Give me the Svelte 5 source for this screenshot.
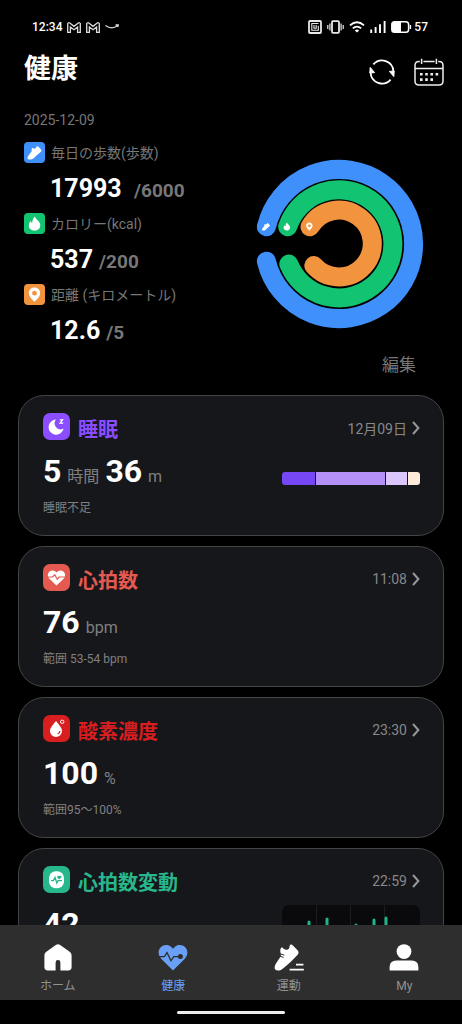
<script lang="ts">
	interface Card {
		id: string;
		title: string;
		color: string;
		time: string;
		values: [string, string?][];
		note?: string;
	}

	// 24x24 glyphs shared by the metric badges and the rings
	const glyphs = {
		shoe: 'M2 21.5C1 19.8 2 17.6 4 15.2L7.6 10.4C8.2 9.4 7.4 7.4 8.2 5.8C9 4.6 10 6.4 11.8 6.4C14 6.4 14.4 4.6 15 3.2C15.6 2 16.8 2.6 18.2 4L21.6 7.6C22.8 9 22.4 10 21 11.4L15 16.6L10.4 20.8C8 22.8 4 23 2 21.5Z',
		flame:
			'M12.6 1.5C13.4 5 18 7.2 19.8 11.2C22.4 17.4 18 22.5 12 22.5C5.6 22.5 2.4 17.6 4 12.8C4.6 10.8 5.6 9.6 6.4 8.4C7 9.8 7.4 10.8 8.6 11.4C8.6 7.2 10 4 12.6 1.5Z',
		pin: 'M12 1.5C7 1.5 3.6 5.2 3.6 9.8C3.6 15 9.4 20.4 12 22.8C14.6 20.4 20.4 15 20.4 9.8C20.4 5.2 17 1.5 12 1.5ZM12 6.4A3.6 3.6 0 1 1 12 13.6A3.6 3.6 0 1 1 12 6.4Z'
	};

	const metrics = [
		{ label: '毎日の歩数(歩数)', value: '17993 ', goal: '/6000', color: '#4090fb', glyph: glyphs.shoe },
		{ label: 'カロリー(kcal)', value: '537', goal: '/200', color: '#12c471', glyph: glyphs.flame },
		{ label: '距離 (キロメートル)', value: '12.6', goal: '/5', color: '#f2943e', glyph: glyphs.pin }
	];

	const rings = [
		{ d: 'M12.4 67.8A74.6 74.6 0 1 1 12.4 102.2', icon: 'translate(7.4 63)', ...metrics[0] },
		{ d: 'M33.7 67.7A54 54 0 1 1 34.8 105', icon: 'translate(28.2 63)', ...metrics[1] },
		{ d: 'M56 67.8A33.4 33.4 0 1 1 59.8 106.6', icon: 'translate(50.8 63)', ...metrics[2] }
	];

	const cards: Card[] = [
		{
			id: 'sleep',
			title: '睡眠',
			color: '#8a4dff',
			time: '12月09日',
			values: [
				['5', '時間'],
				['36', 'm']
			],
			note: '睡眠不足'
		},
		{
			id: 'heart',
			title: '心拍数',
			color: '#e55a50',
			time: '11:08',
			values: [['76', 'bpm']],
			note: '範囲 53-54 bpm'
		},
		{
			id: 'oxygen',
			title: '酸素濃度',
			color: '#d91e20',
			time: '23:30',
			values: [['100', '%']],
			note: '範囲95〜100%'
		},
		{
			id: 'hrv',
			title: '心拍数変動',
			color: '#28b78c',
			time: '22:59',
			values: [['42']]
		}
	];

	const sleepStages = [
		{ share: 33, color: '#7648f5' },
		{ share: 70, color: '#b490f8' },
		{ share: 21, color: '#dac6fa' },
		{ share: 12, color: '#feead8' }
	];

	const hrvBars = [
		{ x: 27, top: 16 },
		{ x: 45, top: 13 },
		{ x: 74, top: 19 },
		{ x: 92, top: 14 },
		{ x: 104, top: 12 }
	];
</script>

<div class="screen">
	<div class="status">
		<span>12:34</span>
		{#each [0, 1] as mail (mail)}
			<svg width="14" height="11" viewBox="0 0 14 11" fill="none" stroke="#ddd" stroke-width="1.3">
				<path d="M.7 10.3V1.6Q1.4.2 2.8 1L7 4.3L11.2 1Q12.6.2 13.3 1.6V10.3H10.6V5L7 7.8L3.4 5V10.3Z" />
			</svg>
		{/each}
		<svg width="14" height="6" viewBox="0 0 14 6" fill="none" stroke="#ddd" stroke-width="1.3">
			<path d="M.5 1.5Q6.5 6 12.4 1.8M10.6 1H13.2L12.8 3" />
		</svg>
		<span class="spacer"></span>
		<svg width="14" height="14" viewBox="0 0 14 14" fill="none" stroke="#e8e8e8">
			<rect x="1" y="1" width="12" height="12" rx="1" stroke-width="1.8" />
			<path d="M10.5 3.5H3.8V10.3H10.3V5.8M6 5V8.2H8.2V5" stroke-width="1.1" />
		</svg>
		<svg width="17" height="14" viewBox="0 0 17 14" fill="none" stroke="#e8e8e8">
			<rect x="5" y="1.2" width="7" height="11.6" rx="1" stroke-width="1.8" />
			<path d="M2.9 3.5V10.5M14.1 3.5V10.5M.8 5V9M16.2 5V9" stroke-width="1.2" />
		</svg>
		<svg width="16" height="12" viewBox="0 0 16 12" fill="none" stroke="#fff" stroke-width="1.8">
			<path d="M1 4.4Q8-1.8 15 4.4M3.8 7.4Q8 3.8 12.2 7.4" />
			<path d="M5.8 9.4Q8 7.8 10.2 9.4L8 11.6Z" fill="#fff" stroke="none" />
		</svg>
		<svg width="16" height="12" viewBox="0 0 16 12" stroke="#fff" stroke-width="1.9">
			<path d="M1.2 8.6V12M5.6 6V12M10 3.2V12M14.6 0V12" />
		</svg>
		<div class="battery">
			<svg width="21" height="12" viewBox="0 0 21 12">
				<rect x=".8" y=".8" width="16.8" height="10.4" rx="2.8" fill="none" stroke="#fff" stroke-width="1.5" />
				<path d="M3 1H10V11H3Q1 11 1 8.5V3.5Q1 1 3 1Z" fill="#fff" />
				<path d="M19.4 4V8" stroke="#fff" stroke-width="1.4" />
			</svg>
			57
		</div>
	</div>

	<header>
		<h1>健康</h1>
		<button aria-label="更新">
			<svg width="28" height="28" viewBox="0 0 28 28" fill="none" stroke="#fff" stroke-width="1.8">
				<path d="M2.6 14.5A11.4 11.4 0 0 0 22.6 21.6M25.4 13.5A11.4 11.4 0 0 0 5.4 6.4" />
				<path d="M2.2 9.4L6.6 14.6L1.8 15ZM25.8 18.6L21.4 13.4L26.2 13Z" fill="#fff" stroke-width="1" />
			</svg>
		</button>
		<button aria-label="カレンダー">
			<svg width="30" height="28" viewBox="0 0 30 28" fill="none" stroke="#eee" stroke-width="1.5">
				<path d="M5.8 3.4H5Q1 3.4 1 7.4V23Q1 27 5 27H25Q29 27 29 23V7.4Q29 3.4 25 3.4H24.2M9.4 3.4H20.6" />
				<path d="M1 10.6H29M7.6.8V6M22.4.8V6" />
				<path d="M6 16.2H25M6 21.6H20" stroke-width="2.6" stroke-dasharray="2.6 2.6" />
			</svg>
		</button>
	</header>

	<main>
		<section class="summary">
			<p class="date">2025-12-09</p>
			<div class="overview">
				<dl>
					{#each metrics as metric (metric.label)}
						<dt>
							<svg width="21" height="21" viewBox="0 0 21 21">
								<rect width="21" height="21" rx="4" fill={metric.color} />
								<path d={metric.glyph} transform="translate(2.4 2.4) scale(.675)" fill="#fff" fill-rule="evenodd" />
							</svg>
							{metric.label}
						</dt>
						<dd><strong>{metric.value}</strong><span>{metric.goal}</span></dd>
					{/each}
				</dl>
				<svg class="rings" width="170" height="170" viewBox="0 0 170 170">
					{#each rings as ring (ring.label)}
						<path d={ring.d} fill="none" stroke={ring.color} stroke-width="19" stroke-linecap="round" />
						<g transform={ring.icon}>
							<path d={ring.glyph} transform="scale(.38)" fill="#fff" fill-rule="evenodd" />
						</g>
					{/each}
				</svg>
			</div>
			<button class="edit">編集</button>
		</section>

		{#each cards as card (card.id)}
			<article>
				<div class="card-head">
					<svg width="27" height="27" viewBox="0 0 27 27">
						<rect width="27" height="27" rx="7" fill={card.color} />
						{#if card.id === 'sleep'}
							<path d="M13 6.6A7.6 7.6 0 1 0 20.6 15.6A6 6 0 0 1 13 6.6Z" fill="#fff" />
							<path d="M16.8 6.8H19.6L17 10.2H20.2" fill="none" stroke="#fff" stroke-width="1.2" />
						{:else if card.id === 'heart'}
							<path d="M13.5 21.6L6.4 14.8C3 11 5.8 6.2 9.6 6.4C11.4 6.4 12.8 7.4 13.5 8.6C14.2 7.4 15.6 6.4 17.4 6.4C21.2 6.2 24 11 20.6 14.8Z" fill="#fff" />
							<path d="M4.6 13H9.6L11.8 10.8L14.2 15.2L16 13H22.4" fill="none" stroke={card.color} stroke-width="1.2" />
						{:else if card.id === 'oxygen'}
							<path d="M13 6C16 9.6 19 12.8 19 16A6 6 0 0 1 7 16C7 12.8 10 9.6 13 6Z" fill="#fff" />
							<path d="M17 16Q16.8 18.4 14.6 18.8" fill="none" stroke={card.color} stroke-width="1.3" />
							<circle cx="19.2" cy="6.8" r="1.7" fill="none" stroke="#fff" stroke-width="1" />
						{:else}
							<rect x="6" y="5.2" width="15" height="17" rx="6.8" fill="#fff" />
							<path d="M8 14.6H10.4L12 11.4L13.8 17L15 14.6H19" fill="none" stroke={card.color} stroke-width="1.3" />
							<path d="M16.2 13.4L14 11.2Q14 9 16.2 10Q18.6 9 18.6 11.2Z" fill={card.color} />
						{/if}
					</svg>
					<h2 style:color={card.color}>{card.title}</h2>
					<a href="#{card.id}">
						{card.time}
						<svg width="8" height="14" viewBox="0 0 8 14" fill="none" stroke="#98989a" stroke-width="2">
							<path d="M1 1L6.4 7L1 13" />
						</svg>
					</a>
				</div>
				<div class="card-body">
					<div>
						<p class="value">
							{#each card.values as [amount, unit] (amount)}
								<strong>{amount}</strong>
								{#if unit}<span>{unit}</span>{/if}
							{/each}
						</p>
						{#if card.note}
							<p class="note">{card.note}</p>
						{/if}
					</div>
					{#if card.id === 'sleep'}
						<div class="stages">
							{#each sleepStages as stage (stage.color)}
								<i style:flex-grow={stage.share} style:background={stage.color}></i>
							{/each}
						</div>
					{:else if card.id === 'hrv'}
						<svg width="138" height="54" viewBox="0 0 138 54">
							<rect width="138" height="54" rx="7" fill="#0a0a0c" />
							<path d="M34.5 0V54M68.5 0V54M102.5 0V54" stroke="#1c1c1f" />
							{#each hrvBars as bar (bar.x)}
								<path d="M{bar.x} {bar.top + 1}V46" stroke="#1fb489" stroke-width="3" stroke-linecap="round" />
							{/each}
						</svg>
					{/if}
				</div>
			</article>
		{/each}
	</main>

	<nav>
		<a href="#home">
			<svg width="30" height="27" viewBox="0 0 30 27" fill="#fff">
				<path d="M12.8 1Q15 -.4 17.2 1L27 8Q28.6 9.4 28.6 11.4V23Q28.6 26.4 25.2 26.4H17.4V18.4Q17.4 16 15 16Q12.6 16 12.6 18.4V26.4H4.8Q1.4 26.4 1.4 23V11.4Q1.4 9.4 3 8Z" />
			</svg>
			ホーム
		</a>
		<a href="#health" class="active" aria-current="page">
			<svg width="30" height="27" viewBox="0 0 30 27">
				<path d="M15 26.4L3.4 15C-3.4 7.6 3.4-1.2 11 1.4C12.8 2.2 14.2 3.4 15 4.8C15.8 3.4 17.2 2.2 19 1.4C26.6-1.2 33.4 7.6 26.6 15Z" fill="#69a0f5" />
				<path d="M1 12.6H6.4L9 8.6L13 16.8L15.8 12.6H22" fill="none" stroke="#2e2e2e" stroke-width="1.3" />
				<circle cx="22.4" cy="12.6" r="2.5" fill="#2e2e2e" />
			</svg>
			健康
		</a>
		<a href="#sport">
			<svg width="30" height="27" viewBox="0 0 30 27">
				<path d="M1.2 25.6C0 24 .8 21 3 18L6.6 12.4C7.6 10.6 5.8 8 6.4 5.6C6.8 3.2 8.6 3 9.4 4.6C10.2 6 15 6.4 15.4 3.4C15.6 1 16.2-.2 18.4 1L23.6 6.2C25 8 24.8 9.4 23.4 11L16.6 18L9.6 24C7.2 26.6 3 27.4 1.2 25.6Z" fill="#fff" />
				<path d="M6.4 9.8L10.4 11.2M5.6 12.2L9.6 13.4" stroke="#2e2e2e" stroke-width="1" />
				<path d="M22 20.6H29.4M15.6 25.6H29.8" stroke="#fff" stroke-width="1.8" />
			</svg>
			運動
		</a>
		<a href="#my">
			<svg width="30" height="27" viewBox="0 0 30 27" fill="#fff">
				<circle cx="15" cy="7.6" r="7.4" />
				<path d="M.6 26.4V23Q.6 16.4 7.4 16.4H22.6Q29.4 16.4 29.4 23V26.4Z" />
			</svg>
			My
		</a>
	</nav>
	<div class="gesture"><span></span></div>
</div>

<style>
	:global(body) {
		margin: 0;
		background: #000;
	}

	.screen {
		display: flex;
		flex-direction: column;
		height: 100vh;
		overflow: hidden;
		background: #000;
		color: #fff;
		font-family: Roboto, 'Noto Sans CJK JP', sans-serif;
	}

	h1,
	h2,
	p,
	dl,
	dd {
		margin: 0;
	}

	svg {
		display: block;
		flex-shrink: 0;
	}

	button {
		padding: 0;
		border: 0;
		background: none;
		color: inherit;
		font: inherit;
		cursor: pointer;
	}

	a {
		color: inherit;
		text-decoration: none;
	}

	.status {
		display: flex;
		align-items: center;
		gap: 5px;
		box-sizing: border-box;
		height: 52px;
		padding: 2px 34px 0 32px;
		font-size: 12px;
		font-weight: 500;
	}

	.spacer {
		flex: 1;
	}

	.battery {
		display: flex;
		align-items: center;
		gap: 2px;
	}

	header {
		display: flex;
		align-items: flex-end;
		gap: 18px;
		padding: 0 18px 0 24px;
	}

	h1 {
		flex: 1;
		font-size: 27px;
		line-height: 34px;
		font-weight: 700;
	}

	main {
		flex: 1;
		min-height: 0;
		overflow: hidden;
		padding: 24px 18px 0;
	}

	.summary {
		display: flex;
		flex-direction: column;
		padding: 0 20px 0 6px;
		margin-bottom: 19px;
		color: #777;
	}

	.date {
		font-size: 14px;
		line-height: 20px;
		margin-bottom: 11px;
	}

	.overview {
		display: flex;
		justify-content: space-between;
	}

	dt {
		display: flex;
		align-items: center;
		gap: 6px;
		height: 22px;
		font-size: 14px;
	}

	dd {
		display: flex;
		align-items: baseline;
		gap: 6px;
		height: 49px;
		padding-left: 26px;
		font-size: 19px;
		font-weight: 700;
		line-height: 51px;
		white-space: pre;
	}

	dd strong {
		color: #fff;
		font-size: 25px;
		font-weight: 700;
	}

	.rings {
		margin-top: 18px;
	}

	.edit {
		align-self: flex-end;
		margin-right: 8px;
		font-size: 17px;
		line-height: 22px;
	}

	article {
		border: 1px solid #444446;
		border-radius: 26px;
		background: #16171b;
		padding: 17px 23px 18px 24px;
		margin-bottom: 10px;
	}

	.card-head {
		display: flex;
		align-items: center;
		height: 27px;
	}

	h2 {
		flex: 1;
		margin-left: 8px;
		padding-top: 4px;
		font-size: 20px;
		font-weight: 700;
	}

	.card-head a {
		display: flex;
		align-items: center;
		gap: 5px;
		padding-top: 3px;
		color: #88888a;
		font-size: 14px;
	}

	.card-body {
		display: flex;
		justify-content: space-between;
		padding-top: 12px;
	}

	.value {
		display: flex;
		align-items: baseline;
		gap: 6px;
		height: 38px;
		line-height: 38px;
		color: #808082;
		font-size: 16px;
	}

	.value strong {
		color: #fff;
		font-size: 32px;
		font-weight: 700;
	}

	.note {
		margin-top: 9px;
		color: #808082;
		font-size: 12px;
		line-height: 18px;
	}

	.stages {
		display: flex;
		align-self: flex-start;
		gap: 1px;
		width: 138px;
		margin-top: 20px;
		border-radius: 3px;
		overflow: hidden;
	}

	.stages i {
		flex-basis: 0;
		height: 13px;
	}

	nav {
		display: flex;
		height: 75px;
		background: #2e2e2e;
	}

	nav a {
		flex: 1;
		display: flex;
		flex-direction: column;
		align-items: center;
		gap: 6px;
		padding-top: 19px;
		color: #929292;
		font-size: 12px;
		line-height: 18px;
	}

	nav .active {
		color: #69a0f5;
	}

	.gesture {
		display: flex;
		justify-content: center;
		align-items: center;
		height: 24px;
	}

	.gesture span {
		width: 108px;
		height: 3px;
		border-radius: 2px;
		background: #eee;
	}
</style>
